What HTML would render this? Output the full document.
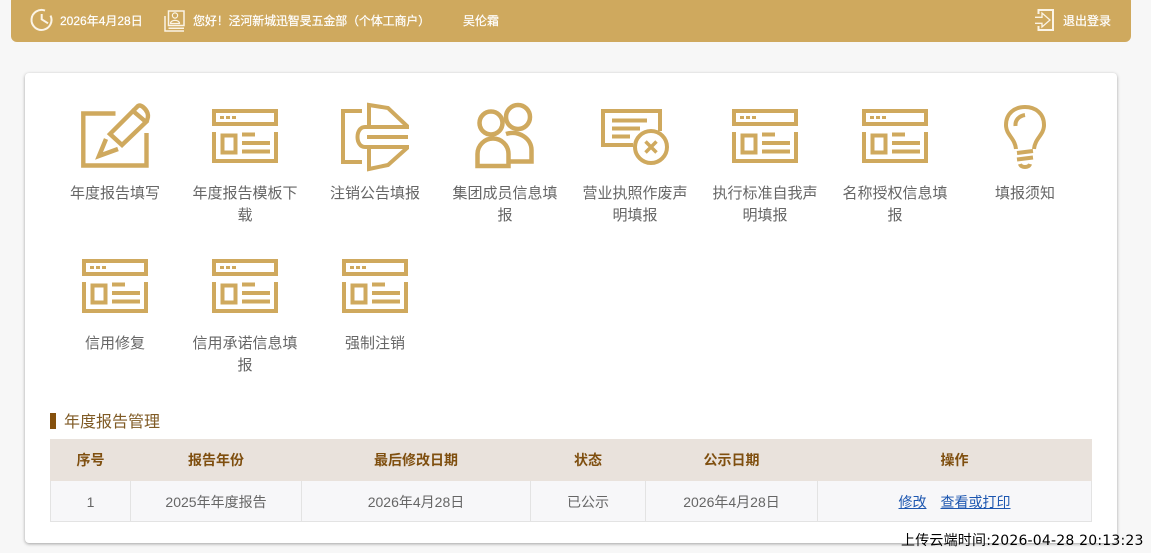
<!DOCTYPE html>
<html lang="zh"><head><meta charset="utf-8"><title>年度报告</title>
<style>
html,body{margin:0;padding:0}
body{width:1151px;height:553px;overflow:hidden;background:#f7f7f7;position:relative;font-family:"Liberation Sans","Noto Sans CJK SC",sans-serif;color:#666}
.hd{position:absolute;left:11px;top:-5px;width:1120px;height:47px;background:#cfa95e;border-radius:6px}
.card{position:absolute;left:25px;top:73px;width:1092px;height:470px;background:#fff;border-radius:4px;box-shadow:0 1px 3px rgba(0,0,0,.35)}
.t{position:absolute;white-space:nowrap}
.h{font-size:12px;color:#fff;top:12.500px;line-height:17px;-webkit-text-stroke:.2px #fff}
.lb{position:absolute;width:110px;font-size:15px;line-height:22px;text-align:center;color:#666}
svg{position:absolute;left:0;top:0}
.g{fill:none;stroke:#cfa95e;stroke-width:4}
table{position:absolute;left:50px;top:439px;width:1042px;border-collapse:collapse;table-layout:fixed;font-size:14px;text-align:center}
th{height:41px;padding:0;box-sizing:border-box;background:#e9e2dc;border:1px solid #e9e2dc;color:#7f4f0f;font-weight:bold}
td{height:41px;padding:1px 0 0;box-sizing:border-box;background:#f7f7f9;border:1px solid #e3e3e3;color:#666}
a{color:#1c56b0;text-decoration:underline}
</style></head><body>
<div class="hd"></div>
<div class="card"></div>
<svg width="1151" height="553" viewBox="0 0 1151 553">
<defs>
<g id="tp" class="g">
<rect x="214" y="111" width="62" height="13"/>
<path d="M214 132V161H276V132"/>
<rect x="222.500" y="135.500" width="13" height="17"/>
<path d="M242 134.500H255M242 143H270M242 151.500H270"/>
<path d="M220 117.500H224M226 117.500H230M232 117.500H236" stroke-width="3"/>
</g>
</defs>
<g fill="none" stroke="#fbf4e6">
<path d="M50.500 15.600A10 10 0 1 1 45 10.600" stroke-width="2"/>
<path d="M41.700 14V19.300L48 23.300" stroke-width="2"/>
<path d="M165 16V31H184M168.500 11H184V25.500H168.500ZM168.500 28.300H184" stroke-width="1.500"/>
<circle cx="175" cy="15.500" r="2.600" stroke-width="1.200"/>
<path d="M170.500 23.500C170.500 19.300 179.500 19.300 179.500 23.500Z" stroke-width="1.200"/>
<path d="M1038.500 14V10H1053V30H1038.500V26" stroke-width="2"/>
<path d="M1035 17.300H1042V13L1050 20L1042 27V23.300H1035" stroke-width="1.300"/>
</g>
<g class="g" stroke-width="4.400" style="stroke-width:4.400px">
<path d="M115.500 113.500H83.300V165.500H146.500V133"/>
<path d="M110 134L133 111L146 122L122 145ZM106 139L99 156L118 149"/>
<path d="M133 111L138 106C141 104 146 109 147.500 113C148.500 116 148 119 146 122"/>
</g>
<use href="#tp"/>
<use href="#tp" transform="translate(520 0)"/>
<use href="#tp" transform="translate(650 0)"/>
<use href="#tp" transform="translate(-130 150)"/>
<use href="#tp" transform="translate(0 150)"/>
<use href="#tp" transform="translate(130 150)"/>
<g class="g">
<path d="M362 111H343V162H362"/>
<path d="M369 127V105L388 108L407 126V127H365C355 127 355 147 365 147H407V148L388 165L369 169V147"/>
<path d="M367 137H408"/>
</g>
<g class="g" style="stroke-width:4.500px">
<circle cx="491" cy="123" r="11.500"/>
<circle cx="518" cy="117" r="12"/>
<path d="M477.500 166V154A15.500 15.500 0 0 1 508.500 154V166Z"/>
<path d="M506 134C518 130 531.500 138 531.500 150V161.500H510"/>
</g>
<g class="g">
<path d="M633 145H603V111H660V131"/>
<path d="M612 120.500H647M612 128.500H640M612 136.500H630"/>
<circle cx="651" cy="147" r="16"/>
<path d="M645.500 141.500L656.500 152.500M656.500 141.500L645.500 152.500" stroke-width="3.500"/>
</g>
<g class="g">
<path d="M1016 149C1015 138 1006 135 1006 125C1006 113 1015 107 1025 107C1035 107 1044 113 1044 125C1044 135 1035 138 1034 149"/>
<path d="M1015.500 126C1015 120 1019 116 1025 115"/>
<path d="M1017 153L1033 151M1017 159.500L1033 157.500"/>
<path d="M1020 164C1021 168 1029 168 1030 164"/>
</g>
<rect x="50" y="413" width="6" height="16" fill="#85500d"/>
</svg>
<div class="t h" style="left:60px">2026年4月28日</div>
<div class="t h" style="left:193px;letter-spacing:-.15px">您好！泾河新城迅智旻五金部（个体工商户）</div>
<div class="t h" style="left:463px">吴伦霜</div>
<div class="t h" style="left:1063px">退出登录</div>
<div class="lb" style="left:60px;top:183px">年度报告填写</div>
<div class="lb" style="left:190px;top:183px">年度报告模板下载</div>
<div class="lb" style="left:320px;top:183px">注销公告填报</div>
<div class="lb" style="left:450px;top:183px">集团成员信息填报</div>
<div class="lb" style="left:580px;top:183px">营业执照作废声明填报</div>
<div class="lb" style="left:710px;top:183px">执行标准自我声明填报</div>
<div class="lb" style="left:840px;top:183px">名称授权信息填报</div>
<div class="lb" style="left:970px;top:183px">填报须知</div>
<div class="lb" style="left:60px;top:333px">信用修复</div>
<div class="lb" style="left:190px;top:333px">信用承诺信息填报</div>
<div class="lb" style="left:320px;top:333px">强制注销</div>
<div class="t" style="left:64px;top:412px;font-size:16px;line-height:21px;color:#7f5a24">年度报告管理</div>
<table>
<colgroup><col style="width:80px"><col style="width:171px"><col style="width:229px"><col style="width:115px"><col style="width:172px"><col></colgroup>
<tr><th>序号</th><th>报告年份</th><th>最后修改日期</th><th>状态</th><th>公示日期</th><th>操作</th></tr>
<tr><td>1</td><td>2025年年度报告</td><td>2026年4月28日</td><td>已公示</td><td>2026年4月28日</td><td><a>修改</a><a style="margin-left:14px">查看或打印</a></td></tr>
</table>
<div class="t" style="left:901px;top:532px;font-size:14px;letter-spacing:.2px;line-height:19px;color:#000;font-family:'DejaVu Sans','Noto Sans CJK SC',sans-serif">上传云端时间:2026-04-28 20:13:23</div>
</body></html>
